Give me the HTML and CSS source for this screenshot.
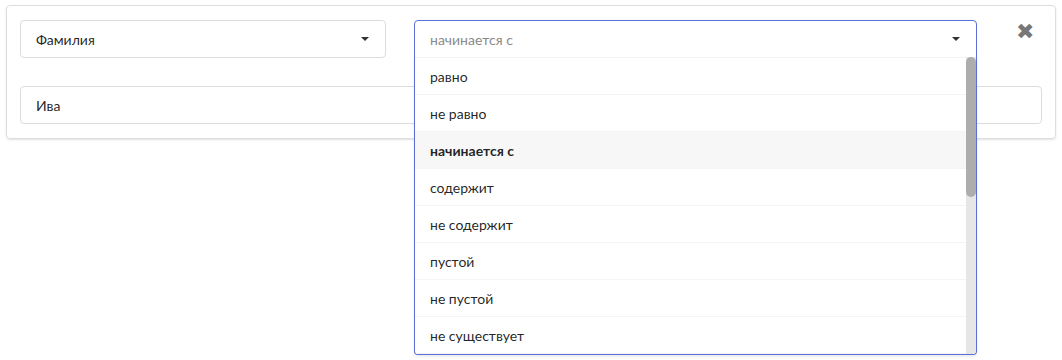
FILE: index.html
```html
<!DOCTYPE html>
<html>
<head>
    <title>Фильтр</title>
    <link rel="stylesheet" href="styles.css">
</head>
<body>

    <div class="filter-card">
        <div class="filter-row">
            <div class="select field-select">
                <span class="select-text">Фамилия</span>
                <span class="caret"></span>
            </div>

            <div class="select op-select active">
                <span class="select-text placeholder">начинается с</span>
                <span class="caret"></span>

                <div class="menu">
                    <div class="menu-list">
                        <div class="item">равно</div>
                        <div class="item">не равно</div>
                        <div class="item selected">начинается с</div>
                        <div class="item">содержит</div>
                        <div class="item">не содержит</div>
                        <div class="item">пустой</div>
                        <div class="item">не пустой</div>
                        <div class="item">не существует</div>
                        <div class="item">существует</div>
                        <div class="item">заканчивается на</div>
                        <div class="item">больше</div>
                        <div class="item">больше или равно</div>
                        <div class="item">меньше</div>
                        <div class="item">меньше или равно</div>
                        <div class="item">в списке</div>
                        <div class="item">не в списке</div>
                        <div class="item">между</div>
                    </div>
                    <!-- scrollbar drawn by hand, native one is hidden -->
                    <div class="scroll-track"><div class="scroll-thumb"></div></div>
                </div>
            </div>

            <button class="remove-btn" title="Удалить">&#10006;</button>
        </div>

        <div class="filter-row">
            <div class="text-input">Ива</div>
        </div>
    </div>

</body>
</html>
```

FILE: styles.css
```css
html, body {
    height: 100%;
}

body {
    margin: 0;
    background-color: #ffffff;
    font-family: Lato, "Noto Sans", sans-serif;
    font-size: 14px;
    color: rgba(0, 0, 0, 0.87);
}

.filter-card {
    margin: 5px 6px;
    padding: 14px 13px;
    border: 1px solid #dedede;
    border-radius: 4px;
    box-shadow: 0 1px 2px rgba(0, 0, 0, 0.12);
    display: flex;
    flex-direction: column;
    gap: 28px;
}

.filter-row {
    display: flex;
    align-items: flex-start;
}

.select {
    position: relative;
    box-sizing: border-box;
    height: 38px;
    padding: 0 15px;
    border: 1px solid #dcdcdc;
    border-radius: 4px;
    display: flex;
    align-items: center;
    justify-content: space-between;
    background-color: #ffffff;
}

.field-select {
    width: 366px;
}

.op-select {
    width: 563px;
    margin-left: 28px;
}

.op-select.active {
    border-color: #5b6fd8;
    border-bottom-left-radius: 0;
    border-bottom-right-radius: 0;
}

.placeholder {
    color: #8a8a8a;
}

.caret {
    width: 0;
    height: 0;
    margin-right: 1px;
    border-left: 4px solid transparent;
    border-right: 4px solid transparent;
    border-top: 4px solid #333333;
}

.menu {
    position: absolute;
    top: 36px;
    left: -1px;
    right: -1px;
    height: 297px;
    display: flex;
    border: 1px solid #5b6fd8;
    border-top: none;
    border-radius: 0 0 4px 4px;
    background-color: #ffffff;
    box-shadow: 0 2px 3px rgba(0, 0, 0, 0.08);
    overflow: hidden;
    z-index: 10;
}

.menu-list {
    flex: 1;
    overflow-y: scroll;
    scrollbar-width: none;
}

.menu-list::-webkit-scrollbar {
    display: none;
}

.scroll-track {
    width: 10px;
    background-color: #e6e6e6;
}

.scroll-thumb {
    height: 140px;
    background-color: #adadad;
    border-radius: 5px;
}

.item {
    height: 37px;
    box-sizing: border-box;
    padding: 0 15px;
    display: flex;
    align-items: center;
    border-top: 1px solid #f4f4f4;
}

.item.selected {
    background-color: #f7f7f7;
    font-weight: bold;
}

.remove-btn {
    margin-left: 39px;
    padding: 0;
    border: none;
    background: none;
    color: #777777;
    font-size: 22px;
    line-height: 24px;
    cursor: pointer;
    font-family: "DejaVu Sans", sans-serif;
}

.text-input {
    flex: 1;
    box-sizing: border-box;
    height: 38px;
    padding: 0 15px;
    border: 1px solid #dcdcdc;
    border-radius: 4px;
    display: flex;
    align-items: center;
}
```
